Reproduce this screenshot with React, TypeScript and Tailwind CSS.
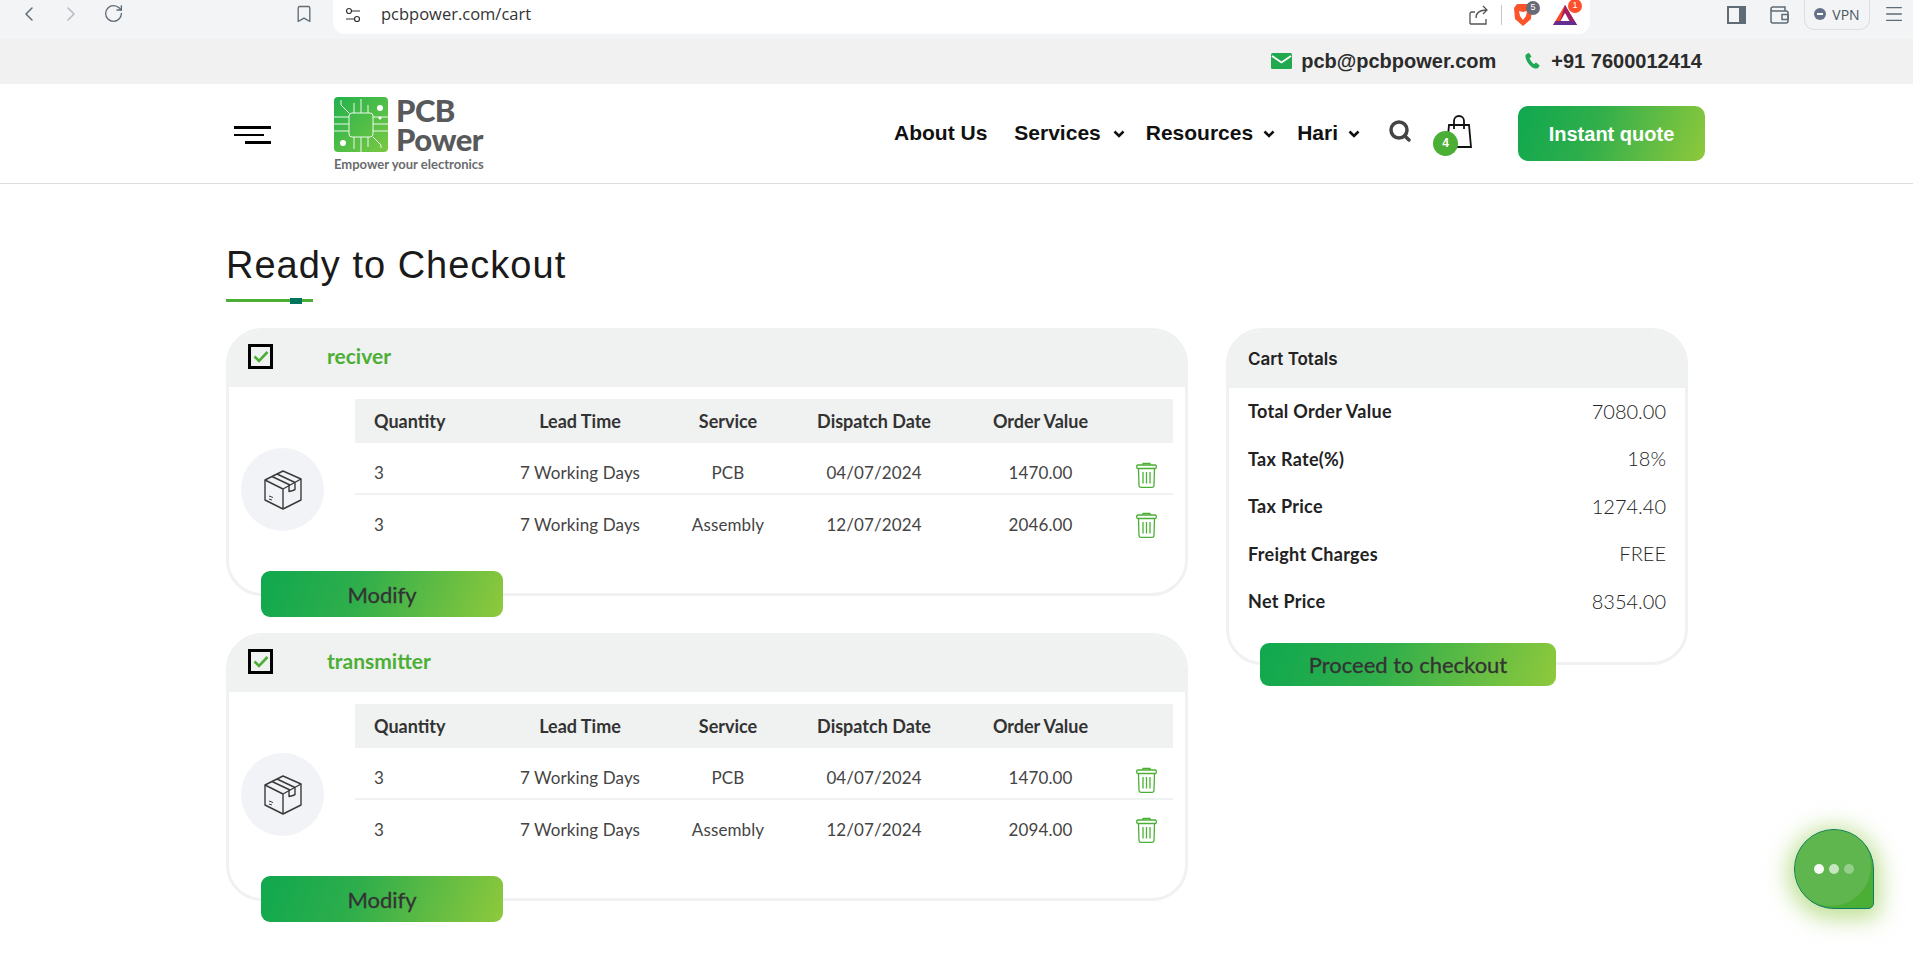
import { Bookmark, ChevronLeft, ChevronRight, Menu, RotateCw, Search } from "lucide-react";

const body = "font-['Lato','Open_Sans',sans-serif]";
const arial = "font-['Liberation_Sans',Arial,sans-serif]";
const gradient = "bg-[linear-gradient(110deg,#0fa84f_0%,#2fae4b_40%,#8fc93c_100%)]";

function ChipLogo() {
  return (
    <svg width="54" height="55" viewBox="0 0 54 55" fill="none">
      <defs>
        <linearGradient id="chip" x1="0" y1="0" x2="1" y2="1">
          <stop offset="0" stopColor="#22b14c" />
          <stop offset="1" stopColor="#7ac943" />
        </linearGradient>
      </defs>
      <rect width="54" height="55" rx="4" fill="url(#chip)" />
      <g stroke="#fff" strokeWidth="1" opacity="0.9">
        <rect x="15" y="16" width="24" height="24" rx="3" />
        <path d="M0 20h15M0 27h15M0 34h15M39 20h15M39 27h15M39 34h15" />
        <path d="M20 16V6M27 16V2M34 16V8M20 40v12M27 40v15M34 40v10" />
        <path d="M15 16 7 8V3M39 40l8 8v3" />
      </g>
      <circle cx="9" cy="46" r="3" fill="#fff" />
      <circle cx="46" cy="11" r="3" fill="#fff" />
      <circle cx="46" cy="21" r="1.5" fill="#fff" />
    </svg>
  );
}

function BoxIcon() {
  return (
    <svg width="38" height="40" viewBox="0 0 38 40" fill="none" stroke="#3a3a3a" strokeWidth="1.4" strokeLinejoin="round">
      <path d="M1 10 19 1l18 8v21l-18 9-18-9z" />
      <path d="M1 10l18 9 18-10M19 19v20" />
      <path d="M8 6.5l18 8.5M13 4l18 8.500M25 14.500v7l4 -1 2-1v-7" />
      <path d="M5 26l4 1.500M5 29l3 1" strokeWidth="1" />
    </svg>
  );
}

function TrashIcon() {
  return (
    <svg width="21" height="26" viewBox="0 0 21 26" fill="none" stroke="#4caf35" strokeWidth="1.300" strokeLinejoin="round">
      <path d="M7 3V1.500h7V3" />
      <rect x="0.700" y="3" width="19.600" height="3.500" rx="1.200" />
      <path d="M2.500 6.500 3 23.500a1.800 1.800 0 0 0 1.800 1.800h11.400a1.800 1.800 0 0 0 1.800-1.800l.5-17" />
      <path d="M7 10v11.500M10.500 10v11.500M14 10v11.500" />
    </svg>
  );
}

function Chevron() {
  return (
    <svg width="12" height="8" viewBox="0 0 12 8" fill="none" stroke="#111" strokeWidth="2.600">
      <path d="M1.500 1.500 6 6l4.500-4.500" />
    </svg>
  );
}

function BrowserBar() {
  return (
    <div className="flex h-[39px] items-start bg-[#f3f4f6] text-[#5f6b75]">
      <ChevronLeft className="ml-[17px] mt-[2px] h-6 w-6" strokeWidth={1.500} />
      <ChevronRight className="ml-[18px] mt-[2px] h-6 w-6 text-[#b4bbc2]" strokeWidth={1.500} />
      <RotateCw className="ml-[20px] mt-[3px] h-[21px] w-[21px]" strokeWidth={1.500} />
      <Bookmark className="ml-[170px] mt-[3px] h-[22px] w-[20px]" strokeWidth={1.600} />
      <div className="ml-[19px] flex h-[34px] w-[1257px] items-center rounded-b-[12px] bg-white pb-[5px]">
        <svg className="ml-[12px]" width="16" height="16" viewBox="0 0 16 16" fill="none" stroke="#333" strokeWidth="1.200">
          <circle cx="4" cy="4" r="2.500" />
          <path d="M7 4h8M1 12h8" />
          <circle cx="12" cy="12" r="2.500" />
        </svg>
        <span className="ml-[20px] font-['Open_Sans',sans-serif] text-[16.500px] text-[#333]">pcbpower.com/cart</span>
        <svg className="ml-[938px]" width="20" height="20" viewBox="0 0 20 20" fill="none" stroke="#555" strokeWidth="1.300">
          <path d="M1 19V9a2 2 0 0 1 2-2h3M1 19h16v-5" />
          <path d="M7 13c0-5 4-8 11-8M14 1l4 4-4 4" />
        </svg>
        <div className="ml-[12px] h-[20px] w-px bg-[#c6c9cc]" />
        <div className="relative ml-[11px] h-[24px] w-[20px]">
          <svg width="20" height="24" viewBox="0 0 20 24">
            <path d="M4 1h12l3 4-1 11-8 7-8-7L1 5z" fill="#fb542b" />
            <path d="M6 8l4 1 4-1-1 5-3 4-3-4z" fill="#fff" />
          </svg>
          <span className={`absolute -right-[7px] -top-[2px] flex h-[14px] w-[14px] items-center justify-center rounded-full bg-[#676b75] text-[9px] text-white ${arial}`}>5</span>
        </div>
        <div className="relative ml-[20px] h-[22px] w-[24px]">
          <svg width="24" height="22" viewBox="0 0 24 22">
            <path d="M12 1 0 21h24z" fill="#ff4724" />
            <path d="M12 1 6 21h18z" fill="#9e1f63" />
            <path d="M12 9l-5 9h10z" fill="#fff" />
            <path d="M0 21h24l-2.500-4H2.500z" fill="#662d91" />
          </svg>
          <span className={`absolute -right-[5px] -top-[5px] flex h-[14px] w-[14px] items-center justify-center rounded-full bg-[#ff4f2b] text-[9px] text-white ${arial}`}>1</span>
        </div>
      </div>
      <svg className="ml-[137px] mt-[6px]" width="19" height="18" viewBox="0 0 19 18">
        <path d="M1 1h17v16H1z" fill="none" stroke="#5f6b75" strokeWidth="2" />
        <path d="M12 1h6v16h-6z" fill="#5f6b75" />
      </svg>
      <svg className="ml-[24px] mt-[6px]" width="19" height="18" viewBox="0 0 19 18" fill="none" stroke="#5f6b75" strokeWidth="1.500">
        <path d="M3 1h12v4M1 3v12a2 2 0 0 0 2 2h13a2 2 0 0 0 2-2V7a2 2 0 0 0-2-2H3a2 2 0 0 1-2-2 2 2 0 0 1 2-2" />
        <rect x="12" y="8.500" width="6" height="5" />
      </svg>
      <div className="ml-[15px] flex h-[31px] w-[66px] -translate-y-px items-center justify-center gap-[6px] rounded-b-[10px] border border-t-0 border-[#d9dfe4] font-['Open_Sans',sans-serif] text-[14px] text-[#4a545c]">
        <span className="flex h-[12px] w-[12px] items-center justify-center rounded-full bg-[#66708a]">
          <span className="h-[2px] w-[6px] bg-white" />
        </span>
        VPN
      </div>
      <Menu className="ml-[13px] mt-[3px] h-[22px] w-[22px]" strokeWidth={1.500} />
    </div>
  );
}

function TopBar() {
  return (
    <div className={`flex h-[45px] items-center justify-end bg-[#f1f1f1] pb-[2px] pr-[211px] text-[20px] font-bold text-[#2b2b2b] ${arial}`}>
      <svg width="21" height="16" viewBox="0 0 21 16">
        <rect width="21" height="16" rx="1.500" fill="#22a94f" />
        <path d="M1 3l9.500 6.500L20 3" fill="none" stroke="#fff" strokeWidth="1.800" />
      </svg>
      <span className="ml-[9px]">pcb@pcbpower.com</span>
      <svg className="ml-[28px]" width="18" height="19" viewBox="0 0 24 24" fill="#1fa855">
        <path d="M6.600 1.500 3 3.500c-1.500 1-1.500 4 .5 8.500s6 9 10.500 10.500c2 .6 4 .2 5-1l2-3-5-4-2.500 2c-2-.8-5.500-5-6-8l2.500-2z" />
      </svg>
      <span className="ml-[9px]">+91 7600012414</span>
    </div>
  );
}

function Header() {
  return (
    <header className="flex h-[100px] items-center border-b border-[#dedede] bg-white pl-[234px]">
      <div className="flex w-[37px] translate-y-px flex-col gap-[5px]">
        <span className="h-[3px] w-[37px] bg-black" />
        <span className="h-[2px] w-[30px] bg-black" />
        <span className="ml-[11px] h-[3px] w-[26px] bg-black" />
      </div>
      <div className="ml-[63px] flex w-[155px] flex-col">
        <div className="flex gap-[8px]">
          <ChipLogo />
          <div className={`flex -translate-y-px flex-col text-[#58595b] ${body} font-black`}>
            <span className="text-[31px] leading-[29px] tracking-[-0.500px]">PCB</span>
            <span className="text-[31px] leading-[29px] tracking-[-0.500px]">Power</span>
          </div>
        </div>
        <span className={`mt-[2px] whitespace-nowrap text-[13px] font-bold leading-[14px] text-[#6b6c6e] ${body}`}>Empower your electronics</span>
      </div>
      <nav className={`ml-[405px] flex items-center text-[21px] font-bold text-[#111] ${arial}`}>
        <span className="-translate-y-px">About Us</span>
        <span className="ml-[27px] -translate-y-px">Services</span>
        <span className="ml-[12px]"><Chevron /></span>
        <span className="ml-[21px] -translate-y-px">Resources</span>
        <span className="ml-[10px]"><Chevron /></span>
        <span className="ml-[22px] -translate-y-px">Hari</span>
        <span className="ml-[10px]"><Chevron /></span>
        <Search className="ml-[28px] h-[24px] w-[24px] -translate-y-[3px] text-[#444]" strokeWidth={3.500} />
        <div className="relative ml-[34px] h-[34px] w-[26px] -translate-y-[2px]">
          <svg width="26" height="34" viewBox="0 0 26 34" fill="none" stroke="#111" strokeWidth="1.800">
            <path d="M3 10h20l2 22H1z" />
            <path d="M8 14V6a5 5 0 0 1 10 0v8" />
          </svg>
          <span className={`absolute -left-[13px] top-[16px] flex h-[25px] w-[25px] items-center justify-center rounded-full bg-[#4caf35] text-[12px] font-bold text-white`}>4</span>
        </div>
        <button className={`ml-[46px] flex h-[55px] w-[187px] items-center justify-center rounded-[10px] text-[20px] text-white ${gradient}`}>Instant quote</button>
      </nav>
    </header>
  );
}

type Row = { service: string; date: string; value: string };

function OrderCard({ name, rows }: { name: string; rows: Row[] }) {
  return (
    <section className={`mb-[16px] last:mb-0 ${body}`}>
      <div className="h-[268px] overflow-hidden rounded-[36px] border-[3px] border-[#f0f1f1] bg-white">
        <div className="flex h-[56px] items-center bg-[#f0f1f1] pb-[6px] pl-[19px]">
          <span className="flex h-[25px] w-[25px] items-center justify-center border-[3px] border-black">
            <svg width="16" height="13" viewBox="0 0 16 13" fill="none" stroke="#4caf35" strokeWidth="2.600">
              <path d="M1.500 6.500 6 11l8.500-9" />
            </svg>
          </span>
          <span className="ml-[54px] text-[21px] font-bold text-[#4caf35]">{name}</span>
        </div>
        <div className="flex pt-[12px]">
          <div className="ml-[12px] mt-[49px] flex h-[83px] w-[83px] items-center justify-center rounded-full bg-[#f1f3f6]">
            <BoxIcon />
          </div>
          <div className="ml-[31px] w-[818px] text-[#444]">
            <div className="grid h-[44px] grid-cols-[137px_176px_120px_172px_161px_52px] items-center bg-[#f0f1f1] text-center text-[18px] font-bold text-[#333]">
              <span className="pl-[19px] text-left">Quantity</span>
              <span>Lead Time</span>
              <span>Service</span>
              <span>Dispatch Date</span>
              <span>Order Value</span>
              <span />
            </div>
            {rows.map((r, i) => (
              <div
                key={r.service}
                className={`grid h-[52px] grid-cols-[137px_176px_120px_172px_161px_52px] items-center text-center text-[17px] tracking-[0.1px] ${i === 0 ? "border-b-2 border-[#f0f1f1] pt-[10px]" : "pt-[7px]"}`}
              >
                <span className="pl-[19px] text-left">3</span>
                <span>7 Working Days</span>
                <span>{r.service}</span>
                <span>{r.date}</span>
                <span>{r.value}</span>
                <span className={`flex -translate-x-px justify-center ${i === 0 ? "pt-[3px]" : "pt-[1px]"}`}><TrashIcon /></span>
              </div>
            ))}
          </div>
        </div>
      </div>
      <button className={`relative ml-[35px] -mt-[25px] flex h-[46px] w-[242px] items-center justify-center rounded-[9px] text-[22px] text-[#333] [-webkit-text-stroke:0.3px_#333] ${gradient}`}>
        Modify
      </button>
    </section>
  );
}

const totals = [
  ["Total Order Value", "7080.00"],
  ["Tax Rate(%)", "18%"],
  ["Tax Price", "1274.40"],
  ["Freight Charges", "FREE"],
  ["Net Price", "8354.00"],
];

function CartTotals() {
  return (
    <aside className={`w-[462px] ${body}`}>
      <div className="h-[337px] overflow-hidden rounded-[36px] border-[3px] border-[#f0f1f1] bg-white">
        <div className="flex h-[57px] items-center bg-[#f0f1f1] pl-[19px] font-['Inter',sans-serif] text-[17px] font-semibold text-[#222]">
          Cart Totals
        </div>
        <div className="px-[19px]">
          {totals.map(([label, value]) => (
            <div key={label} className="flex h-[47.500px] items-center justify-between">
              <span className="text-[18px] font-bold tracking-[0.3px] text-[#222]">{label}</span>
              <span className="-translate-y-px text-[20px] font-light text-[#222]">{value}</span>
            </div>
          ))}
        </div>
      </div>
      <button className={`relative ml-[34px] -mt-[22px] flex h-[43px] w-[296px] items-center justify-center rounded-[9px] text-[22px] text-[#333] [-webkit-text-stroke:0.3px_#333] ${gradient}`}>
        Proceed to checkout
      </button>
    </aside>
  );
}

export default function App() {
  const first = [
    { service: "PCB", date: "04/07/2024", value: "1470.00" },
    { service: "Assembly", date: "12/07/2024", value: "2046.00" },
  ];
  const second = [
    { service: "PCB", date: "04/07/2024", value: "1470.00" },
    { service: "Assembly", date: "12/07/2024", value: "2094.00" },
  ];
  return (
    <div className="relative h-[958px] overflow-hidden bg-white">
      <BrowserBar />
      <TopBar />
      <Header />
      <main className="pl-[226px] pt-[56px]">
        <h1 className={`text-[38px] font-normal leading-[50px] tracking-[1px] text-[#1a1a1a] ${arial}`}>Ready to Checkout</h1>
        <div className="relative mt-[9px] h-[3px] w-[87px] bg-[#4caf35]">
          <span className="absolute -top-[1px] left-[64px] h-[6px] w-[12px] bg-[#00755e]" />
        </div>
        <div className="mt-[26px] flex items-start gap-[38px]">
          <div className="w-[962px]">
            <OrderCard name="reciver" rows={first} />
            <OrderCard name="transmitter" rows={second} />
          </div>
          <CartTotals />
        </div>
      </main>
      <div className="absolute left-[1794px] top-[829px] flex h-[80px] w-[80px] items-center justify-center gap-[5px] overflow-hidden rounded-[50%_50%_6px_50%] border border-[#0d7a68] bg-[#4caf35] shadow-[0_4px_22px_6px_rgba(140,198,63,0.55)]">
        <span className="absolute -left-[4px] -top-[4px] h-[80px] w-[80px] rounded-full bg-[#5fb54e]" />
        <span className="relative h-[10px] w-[10px] rounded-full bg-white opacity-95" />
        <span className="relative h-[10px] w-[10px] rounded-full bg-white opacity-65" />
        <span className="relative h-[10px] w-[10px] rounded-full bg-white opacity-35" />
      </div>
    </div>
  );
}
